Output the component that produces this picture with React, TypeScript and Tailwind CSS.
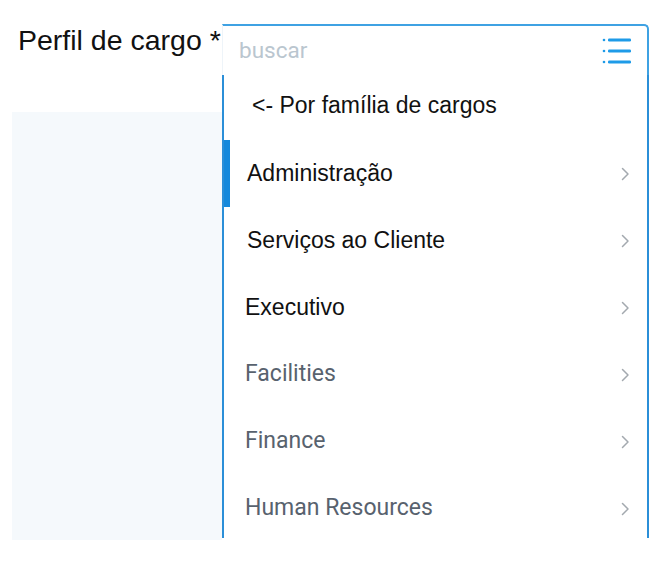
const items = [
  { label: 'Administração', dark: true, active: true },
  { label: 'Serviços ao Cliente', dark: true },
  { label: 'Executivo', dark: true, tight: true },
  { label: 'Facilities' },
  { label: 'Finance' },
  { label: 'Human Resources' },
];

function Chevron() {
  return (
    <svg width="12" height="18" viewBox="0 0 12 18" fill="none" className="shrink-0">
      <path d="M3.5 3.5l5.5 5.5-5.5 5.5" stroke="#a3a9af" strokeWidth="1.5" strokeLinecap="round" strokeLinejoin="round" />
    </svg>
  );
}

function ListIcon() {
  return (
    <svg width="32" height="30" viewBox="0 0 32 30" fill="none">
      <circle cx="3" cy="4" r="1.3" fill="#1e9be8" />
      <circle cx="3" cy="15" r="1.3" fill="#1e9be8" />
      <circle cx="3" cy="26" r="1.3" fill="#1e9be8" />
      <rect x="7" y="2.5" width="23" height="3" rx="1.2" fill="#1e9be8" />
      <rect x="7" y="13.5" width="23" height="3" rx="1.2" fill="#1e9be8" />
      <rect x="7" y="24.5" width="23" height="3" rx="1.2" fill="#1e9be8" />
    </svg>
  );
}

export default function App() {
  return (
    <div className="flex h-[566px] w-[668px] bg-white pt-6 font-['Liberation_Sans',Arial,sans-serif] overflow-hidden">
      <div className="flex w-[222px] flex-col">
        <div className="whitespace-nowrap pl-[18px] text-[28.5px] leading-8 text-[#111]">Perfil de cargo *</div>
        <div className="ml-3 mt-[56px] h-[428px] bg-[#f5f9fc]" />
      </div>

      <div className="flex w-[427px] flex-col">
        <div className="flex h-[51px] items-center justify-between rounded-tr-[5px] border-t-2 border-r-2 border-l border-t-[#3fa2e3] border-r-[#3fa2e3] border-l-[#eef4f9] pl-4 pr-[14px]">
          <span className="font-['Roboto',sans-serif] text-[22.5px] text-[#bac6cf]">buscar</span>
          <ListIcon />
        </div>

        <div className="h-[463px] overflow-hidden border-x-2 border-[#2b8fd8] bg-white">
          <div className="flex h-[61px] items-center pl-[28px] text-[23px] text-[#111]">&lt;- Por família de cargos</div>
          <div className="h-1" />
          {items.map((it) => (
            <div key={it.label} className="relative flex h-[67px] items-center justify-between pr-[16px]">
              {it.active && <div className="absolute left-0 top-0 h-full w-[6px] bg-[#1589dc]" />}
              <span
                className={
                  it.dark
                    ? `text-[23px] text-[#111] ${it.tight ? 'pl-[21px]' : 'pl-[23px]'}`
                    : "pl-[21px] font-['Roboto',sans-serif] text-[23px] text-[#58626e]"
                }
              >
                {it.label}
              </span>
              <Chevron />
            </div>
          ))}
        </div>
      </div>
    </div>
  );
}
